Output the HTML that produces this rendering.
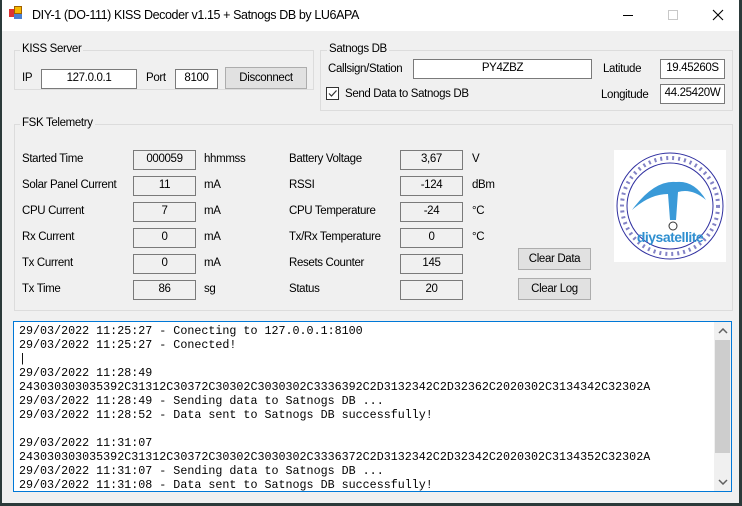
<!DOCTYPE html>
<html><head><style>
*{margin:0;padding:0;box-sizing:border-box}
body{width:742px;height:506px;background:#2b3a3a;position:relative;overflow:hidden;font-family:"Liberation Sans",sans-serif;font-size:11.5px;letter-spacing:-0.35px;color:#000}
.win{position:absolute;left:2px;top:0;width:737px;height:503px;background:#f0f0f0}
.t{position:absolute;left:0;top:0;width:737px;height:31px;background:#fff}
.a{position:absolute;white-space:nowrap}
.g{position:absolute;border:1px solid #dcdcdc}
.gl{position:absolute;background:#f0f0f0;padding:0 2px}
.tb{position:absolute;background:#fff;border:1px solid #7a7a7a;text-align:center;line-height:17px}
.ro{position:absolute;background:#f0f0f0;border:1px solid #7a7a7a;text-align:center;line-height:17px}
.btn{position:absolute;background:#e1e1e1;border:1px solid #adadad;text-align:center}
.log{position:absolute;left:11px;top:321px;width:719px;height:171px;background:#fff;border:1px solid #0078d7;overflow:hidden}
.log pre{position:absolute;left:5px;top:2px;font-family:"Liberation Mono",monospace;font-size:11.7px;line-height:14px;letter-spacing:0}
</style></head><body>
<div class="win">
<div class="t">
 <div class="a" style="left:7px;top:9px;width:8px;height:8px;background:#d33"></div>
 <div class="a" style="left:12px;top:6px;width:8px;height:8px;background:#f5b800;border:1px solid #a06000"></div>
 <div class="a" style="left:12px;top:14px;width:8px;height:5px;background:#4a7fd0"></div>
 <div class="a" style="left:30px;top:8px;font-size:12.5px;letter-spacing:-0.4px">DIY-1 (DO-111) KISS Decoder v1.15 + Satnogs DB by LU6APA</div>
 <div class="a" style="left:621px;top:15px;width:10px;height:1px;background:#000"></div>
 <div class="a" style="left:666px;top:10px;width:10px;height:10px;border:1px solid #c8c8c8"></div>
 <svg class="a" style="left:710px;top:9px" width="12" height="12"><path d="M1 1L11 11M11 1L1 11" stroke="#000" stroke-width="1.1"/></svg>
</div>

<div class="g" style="left:12px;top:50px;width:300px;height:40px"></div>
<div class="gl" style="left:18px;top:43px">KISS Server</div>
<div class="a" style="left:20px;top:72px">IP</div>
<div class="tb" style="left:39px;top:69px;width:96px;height:20px">127.0.0.1</div>
<div class="a" style="left:144px;top:72px">Port</div>
<div class="tb" style="left:173px;top:69px;width:43px;height:20px">8100</div>
<div class="btn" style="left:223px;top:67px;width:82px;height:22px;line-height:20px">Disconnect</div>

<div class="g" style="left:318px;top:50px;width:413px;height:61px"></div>
<div class="gl" style="left:325px;top:43px">Satnogs DB</div>
<div class="a" style="left:326px;top:63px">Callsign/Station</div>
<div class="tb" style="left:411px;top:59px;width:179px;height:20px">PY4ZBZ</div>
<div class="a" style="left:601px;top:63px">Latitude</div>
<div class="tb" style="left:658px;top:59px;width:65px;height:20px">19.45260S</div>
<div class="a" style="left:324px;top:87px;width:13px;height:13px;border:1px solid #333;background:#fff"></div>
<svg class="a" style="left:325px;top:88px" width="11" height="11"><path d="M2 5.5L4.5 8L9.5 2.5" stroke="#333" stroke-width="1.2" fill="none"/></svg>
<div class="a" style="left:343px;top:88px">Send Data to Satnogs DB</div>
<div class="a" style="left:599px;top:89px">Longitude</div>
<div class="tb" style="left:658px;top:84px;width:65px;height:20px">44.25420W</div>

<div class="g" style="left:12px;top:124px;width:719px;height:187px"></div>
<div class="gl" style="left:18px;top:117px">FSK Telemetry</div>

<div class="a" style="left:20px;top:153px">Started Time</div><div class="ro" style="left:131px;top:150px;width:63px;height:20px">000059</div><div class="a" style="left:202px;top:153px">hhmmss</div>
<div class="a" style="left:20px;top:179px">Solar Panel Current</div><div class="ro" style="left:131px;top:176px;width:63px;height:20px">11</div><div class="a" style="left:202px;top:179px">mA</div>
<div class="a" style="left:20px;top:205px">CPU Current</div><div class="ro" style="left:131px;top:202px;width:63px;height:20px">7</div><div class="a" style="left:202px;top:205px">mA</div>
<div class="a" style="left:20px;top:231px">Rx Current</div><div class="ro" style="left:131px;top:228px;width:63px;height:20px">0</div><div class="a" style="left:202px;top:231px">mA</div>
<div class="a" style="left:20px;top:257px">Tx Current</div><div class="ro" style="left:131px;top:254px;width:63px;height:20px">0</div><div class="a" style="left:202px;top:257px">mA</div>
<div class="a" style="left:20px;top:283px">Tx Time</div><div class="ro" style="left:131px;top:280px;width:63px;height:20px">86</div><div class="a" style="left:202px;top:283px">sg</div>

<div class="a" style="left:287px;top:153px">Battery Voltage</div><div class="ro" style="left:398px;top:150px;width:63px;height:20px">3,67</div><div class="a" style="left:470px;top:153px">V</div>
<div class="a" style="left:287px;top:179px">RSSI</div><div class="ro" style="left:398px;top:176px;width:63px;height:20px">-124</div><div class="a" style="left:470px;top:179px">dBm</div>
<div class="a" style="left:287px;top:205px">CPU Temperature</div><div class="ro" style="left:398px;top:202px;width:63px;height:20px">-24</div><div class="a" style="left:470px;top:205px">°C</div>
<div class="a" style="left:287px;top:231px">Tx/Rx Temperature</div><div class="ro" style="left:398px;top:228px;width:63px;height:20px">0</div><div class="a" style="left:470px;top:231px">°C</div>
<div class="a" style="left:287px;top:257px">Resets Counter</div><div class="ro" style="left:398px;top:254px;width:63px;height:20px">145</div>
<div class="a" style="left:287px;top:283px">Status</div><div class="ro" style="left:398px;top:280px;width:63px;height:20px">20</div>

<div class="btn" style="left:516px;top:248px;width:73px;height:22px;line-height:20px">Clear Data</div>
<div class="btn" style="left:516px;top:278px;width:73px;height:22px;line-height:20px">Clear Log</div>

<svg class="a" style="left:612px;top:150px" width="112" height="112" viewBox="0 0 112 112">
<rect width="112" height="112" fill="#fff"/>
<circle cx="56" cy="56" r="53" fill="none" stroke="#3030a0" stroke-width="1"/>
<circle cx="56" cy="56" r="43" fill="none" stroke="#3030a0" stroke-width="1"/>
<circle cx="56" cy="56" r="48" fill="none" stroke="#3030a0" stroke-width="4" stroke-dasharray="2 4" opacity="0.6"/>
<path d="M18 60Q40 30 62 32Q80 30 92 50Q78 38 64 42L62 70L56 70L54 44Q36 44 18 60Z" fill="#3a9ad8"/>
<circle cx="59" cy="76" r="4" fill="none" stroke="#333"/>
<text x="56" y="92" text-anchor="middle" font-family="Liberation Sans,sans-serif" font-weight="bold" font-size="14" letter-spacing="-0.5" fill="#2f8fd0">diysatellite</text>
</svg>

<div class="log"><pre>29/03/2022 11:25:27 - Conecting to 127.0.0.1:8100
29/03/2022 11:25:27 - Conected!
|
29/03/2022 11:28:49
243030303035392C31312C30372C30302C3030302C3336392C2D3132342C2D32362C2020302C3134342C32302A
29/03/2022 11:28:49 - Sending data to Satnogs DB ...
29/03/2022 11:28:52 - Data sent to Satnogs DB successfully!

29/03/2022 11:31:07
243030303035392C31312C30372C30302C3030302C3336372C2D3132342C2D32342C2020302C3134352C32302A
29/03/2022 11:31:07 - Sending data to Satnogs DB ...
29/03/2022 11:31:08 - Data sent to Satnogs DB successfully!</pre>
 <div class="a" style="left:700px;top:0;width:17px;height:169px;background:#f0f0f0"></div>
 <div class="a" style="left:701px;top:18px;width:15px;height:113px;background:#cdcdcd"></div>
 <svg class="a" style="left:704px;top:6px" width="10" height="6"><path d="M1 5L5 1L9 5" stroke="#606060" stroke-width="1.5" fill="none"/></svg>
 <svg class="a" style="left:704px;top:157px" width="10" height="6"><path d="M1 1L5 5L9 1" stroke="#606060" stroke-width="1.5" fill="none"/></svg>
</div>
</div>
</body></html>
